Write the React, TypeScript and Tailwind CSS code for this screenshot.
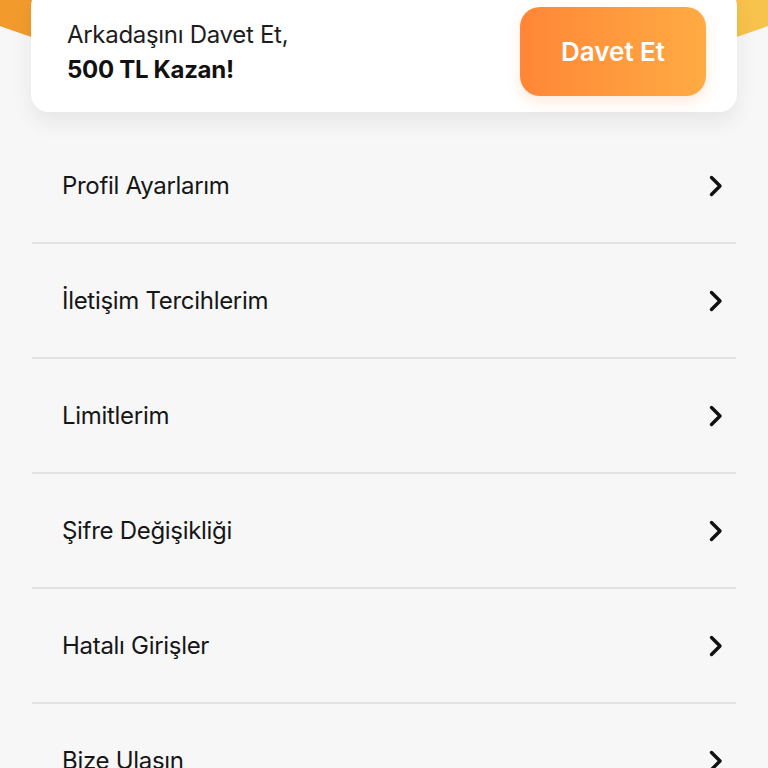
import { Fragment } from "react";

const items = [
  "Profil Ayarlarım",
  "İletişim Tercihlerim",
  "Limitlerim",
  "Şifre Değişikliği",
  "Hatalı Girişler",
  "Bize Ulaşın",
];

function Chevron() {
  return (
    <svg width="14" height="22" viewBox="0 0 14 22" fill="none" className="shrink-0">
      <polyline
        points="2.5,2.5 11,11 2.5,19.5"
        stroke="#111111"
        strokeWidth="3.4"
        strokeLinecap="round"
        strokeLinejoin="round"
      />
    </svg>
  );
}

export default function App() {
  return (
    <div className="relative h-[768px] w-[768px] overflow-hidden bg-[#f7f7f7] font-['Inter',sans-serif] text-[#161616]">
      {/* orange header arc behind the card */}
      <div className="absolute left-[-736px] top-[-2146px] h-[2240px] w-[2240px] rounded-full bg-[linear-gradient(90deg,#ef8f22_0%,#f29a2c_33%,#f8c34c_67%,#f9c850_100%)]" />

      <div className="relative flex flex-col px-[31px]">
        {/* invite card */}
        <div className="-mt-[12px] flex items-center justify-between rounded-[18px] bg-white pb-[16px] pl-[36px] pr-[31px] pt-[19px] shadow-[0_10px_22px_rgba(0,0,0,0.07)]">
          <div className="flex flex-col gap-[4px] text-[24px] leading-[31px] tracking-[-0.3px]">
            <span className="text-[#1d1d1d]">Arkadaşını Davet Et,</span>
            <span className="font-bold text-[#111111]">500 TL Kazan!</span>
          </div>
          <button className="flex h-[89px] w-[186px] items-center justify-center rounded-[20px] bg-[linear-gradient(90deg,#ff8636,#ffab44)] text-[26px] font-semibold text-white shadow-[0_6px_14px_rgba(255,140,60,0.18)]">
            Davet Et
          </button>
        </div>

        {/* settings list */}
        <div className="mt-[17px] flex flex-col">
          {items.map((label, i) => (
            <Fragment key={label}>
              {i > 0 && <div className="mx-[1px] h-[2px] bg-[#e3e3e3]" />}
              <div className="flex h-[113px] items-center justify-between pl-[31px] pr-[14px]">
                <span className="text-[24px] tracking-[-0.3px]">{label}</span>
                <Chevron />
              </div>
            </Fragment>
          ))}
        </div>
      </div>
    </div>
  );
}
